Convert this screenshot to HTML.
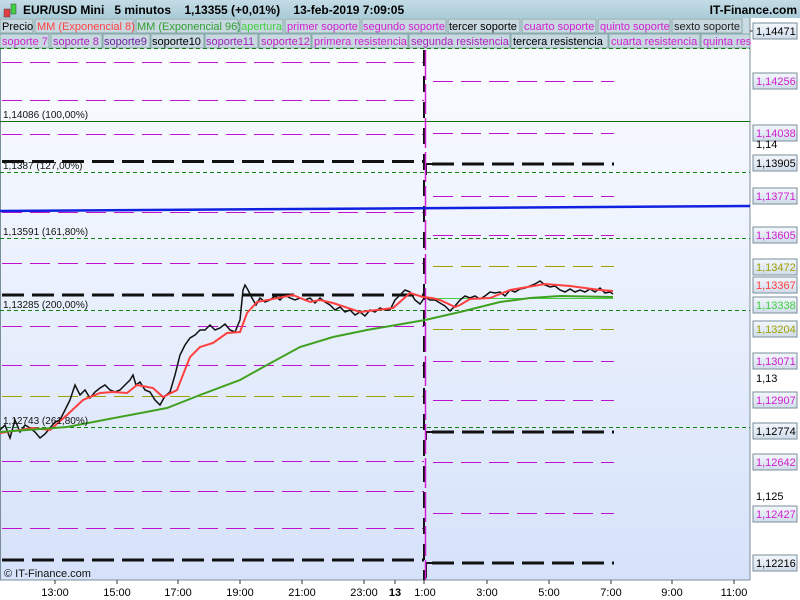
<!DOCTYPE html><html><head><meta charset="utf-8"><style>
body{margin:0;width:800px;height:600px;overflow:hidden;font-family:"Liberation Sans",sans-serif;background:#fff}
svg{display:block}
</style></head><body>
<svg width="800" height="600" xmlns="http://www.w3.org/2000/svg" font-family="Liberation Sans, sans-serif">
<defs>
<linearGradient id="bg" x1="0" y1="0" x2="0" y2="1"><stop offset="0" stop-color="#fafcff"/><stop offset="1" stop-color="#d6e2fa"/></linearGradient>
<linearGradient id="hd" x1="0" y1="0" x2="0" y2="1"><stop offset="0" stop-color="#c4dce6"/><stop offset="1" stop-color="#a9cbd8"/></linearGradient>
<linearGradient id="bx" x1="0" y1="0" x2="0" y2="1"><stop offset="0" stop-color="#f4f8fc"/><stop offset="1" stop-color="#d0dcea"/></linearGradient>
</defs>
<rect width="800" height="600" fill="#fff"/>
<rect x="0" y="0" width="800" height="18" fill="url(#hd)"/>
<rect x="0" y="18" width="750" height="30" fill="#c9dbe3"/>
<rect x="0" y="48" width="750" height="532" fill="url(#bg)"/>
<line x1="750" y1="18" x2="750" y2="580" stroke="#7a8e9a"/>
<line x1="0" y1="580" x2="750" y2="580" stroke="#7a8e9a"/>
<line x1="0.5" y1="48" x2="0.5" y2="580" stroke="#7a8e9a"/>
<rect x="4" y="9" width="6" height="8" fill="#e04040" stroke="#444" stroke-width=".5"/>
<rect x="11" y="4" width="5" height="10" fill="#40d040" stroke="#444" stroke-width=".5"/>
<text x="23" y="14" font-size="12" font-weight="bold">EUR/USD Mini&#160;&#160;&#160;5 minutos&#160;&#160;&#160;&#160;1,13355 (+0,01%)&#160;&#160;&#160;&#160;13-feb-2019 7:09:05</text>
<text x="797" y="14" font-size="12" font-weight="bold" text-anchor="end">IT-Finance.com</text>
<g font-size="11">
<rect x="0" y="19" width="33" height="14" fill="#c8d8e0" stroke="#8aa"/><text x="2" y="30">Precio</text>
<rect x="35" y="19" width="99" height="14" fill="#c8d8e0" stroke="#8aa"/><text x="37" y="30" fill="#ff4040">MM (Exponencial 8)</text>
<rect x="136" y="19" width="102" height="14" fill="#c8d8e0" stroke="#8aa"/><text x="137" y="30" fill="#30a030">MM (Exponencial 96)</text>
<rect x="240" y="19" width="43" height="14" fill="#c8d8e0" stroke="#8aa"/><text x="241" y="30" fill="#40d040">apertura</text>
<rect x="285" y="19" width="75" height="14" fill="#c8d8e0" stroke="#8aa"/><text x="287" y="30" fill="#d020d0">primer soporte</text>
<rect x="362" y="19" width="84" height="14" fill="#c8d8e0" stroke="#8aa"/><text x="363" y="30" fill="#d020d0">segundo soporte</text>
<rect x="448" y="19" width="72" height="14" fill="#c8d8e0" stroke="#8aa"/><text x="449" y="30">tercer soporte</text>
<rect x="522" y="19" width="74" height="14" fill="#c8d8e0" stroke="#8aa"/><text x="524" y="30" fill="#d020d0">cuarto soporte</text>
<rect x="598" y="19" width="72" height="14" fill="#c8d8e0" stroke="#8aa"/><text x="600" y="30" fill="#d020d0">quinto soporte</text>
<rect x="672" y="19" width="70" height="14" fill="#c8d8e0" stroke="#8aa"/><text x="674" y="30" fill="#202020">sexto soporte</text>
<rect x="0" y="34" width="49" height="14" fill="#c8d8e0" stroke="#8aa"/><text x="2" y="45" fill="#d020d0">soporte 7</text>
<rect x="51" y="34" width="51" height="14" fill="#c8d8e0" stroke="#8aa"/><text x="53" y="45" fill="#b020c0">soporte 8</text>
<rect x="103" y="34" width="47" height="14" fill="#c8d8e0" stroke="#8aa"/><text x="104" y="45" fill="#7020a0">soporte9</text>
<rect x="151" y="34" width="53" height="14" fill="#c8d8e0" stroke="#8aa"/><text x="152" y="45">soporte10</text>
<rect x="205" y="34" width="53" height="14" fill="#c8d8e0" stroke="#8aa"/><text x="206" y="45" fill="#a020c0">soporte11</text>
<rect x="259" y="34" width="52" height="14" fill="#c8d8e0" stroke="#8aa"/><text x="261" y="45" fill="#c020c0">soporte12</text>
<rect x="312" y="34" width="96" height="14" fill="#c8d8e0" stroke="#8aa"/><text x="314" y="45" fill="#d020d0">primera resistencia</text>
<rect x="409" y="34" width="101" height="14" fill="#c8d8e0" stroke="#8aa"/><text x="411" y="45" fill="#b020c0">segunda resistencia</text>
<rect x="511" y="34" width="97" height="14" fill="#c8d8e0" stroke="#8aa"/><text x="513" y="45">tercera resistencia</text>
<rect x="609" y="34" width="91" height="14" fill="#c8d8e0" stroke="#8aa"/><text x="611" y="45" fill="#d020d0">cuarta resistencia</text>
<rect x="701" y="34" width="49" height="14" fill="#c8d8e0" stroke="#8aa"/><text x="703" y="45" fill="#d020d0">quinta res</text>
</g>
<g stroke="#108010" stroke-dasharray="4,3" stroke-width="1">
<line x1="0" y1="48.5" x2="750" y2="48.5"/><line x1="0" y1="172.5" x2="750" y2="172.5"/><line x1="0" y1="238.5" x2="750" y2="238.5"/><line x1="0" y1="310.5" x2="750" y2="310.5"/><line x1="0" y1="427.5" x2="750" y2="427.5"/>
</g>
<line x1="0" y1="121.5" x2="750" y2="121.5" stroke="#107010"/>
<g stroke="#c010d0" stroke-dasharray="20,8">
<line x1="2" y1="62.5" x2="424" y2="62.5"/><line x1="2" y1="100.5" x2="424" y2="100.5"/><line x1="2" y1="134.5" x2="424" y2="134.5"/><line x1="2" y1="212.5" x2="424" y2="212.5"/><line x1="2" y1="263.5" x2="424" y2="263.5"/><line x1="2" y1="326.5" x2="424" y2="326.5"/><line x1="2" y1="365.5" x2="424" y2="365.5"/><line x1="2" y1="461.5" x2="424" y2="461.5"/><line x1="2" y1="491.5" x2="424" y2="491.5"/><line x1="2" y1="528.5" x2="424" y2="528.5"/>
</g>
<line x1="2" y1="396.5" x2="424" y2="396.5" stroke="#a0a000" stroke-dasharray="20,8"/>
<g stroke="#111" stroke-width="3" stroke-dasharray="22,8">
<line x1="2" y1="161.5" x2="424" y2="161.5"/><line x1="2" y1="295" x2="424" y2="295"/><line x1="2" y1="560" x2="424" y2="560"/>
</g>
<g stroke="#c010d0" stroke-dasharray="20,8">
<line x1="433" y1="81.5" x2="614" y2="81.5"/><line x1="433" y1="133.5" x2="614" y2="133.5"/><line x1="433" y1="196.5" x2="614" y2="196.5"/><line x1="433" y1="235.5" x2="614" y2="235.5"/><line x1="433" y1="361.5" x2="614" y2="361.5"/><line x1="433" y1="400.5" x2="614" y2="400.5"/><line x1="433" y1="462.5" x2="614" y2="462.5"/><line x1="433" y1="513.5" x2="614" y2="513.5"/>
</g>
<g stroke="#a0a000" stroke-dasharray="20,8"><line x1="433" y1="266.5" x2="614" y2="266.5"/><line x1="433" y1="329.5" x2="614" y2="329.5"/></g>
<g stroke="#111" stroke-width="3" stroke-dasharray="22,8">
<line x1="432" y1="164" x2="614" y2="164"/><line x1="432" y1="432" x2="614" y2="432"/><line x1="432" y1="563" x2="614" y2="563"/>
</g>
<polyline points="426,175 426,164 432,164" fill="none" stroke="#111" stroke-width="2"/>
<polyline points="426,440 426,432 432,432" fill="none" stroke="#111" stroke-width="2"/>
<polyline points="426,578 426,563 432,563" fill="none" stroke="#111" stroke-width="2"/>
<line x1="432" y1="298.5" x2="613" y2="298.5" stroke="#40d040"/>
<line x1="424" y1="50" x2="424" y2="580" stroke="#111" stroke-width="2" stroke-dasharray="16,10"/>
<line x1="425.5" y1="50" x2="425.5" y2="580" stroke="#d020d0" stroke-width="1.5" stroke-dasharray="30,4"/>
<line x1="0" y1="211" x2="750" y2="206" stroke="#1020e0" stroke-width="2.5"/>
<polyline fill="none" stroke="#111" stroke-width="1.5" points="0,430 5,425 10,438 15,420 20,432 25,425 30,428 35,432 40,438 45,434 50,428 55,422 60,420 65,410 70,400 75,385 80,395 85,390 90,398 95,392 100,388 105,385 110,390 115,392 120,390 125,385 130,380 133,375 136,385 140,382 145,390 150,392 155,400 160,405 165,396 170,392 175,375 180,355 185,345 190,338 195,335 200,330 205,330 210,325 215,330 220,328 225,324 230,330 235,332 240,320 243,290 245,285 248,290 252,298 256,305 260,298 265,302 270,300 275,296 280,300 285,295 290,298 295,300 300,298 305,300 310,298 315,303 320,298 325,302 330,305 335,310 340,307 345,312 350,310 355,315 360,312 365,316 370,310 375,312 380,308 385,310 390,310 395,300 400,295 405,290 410,292 415,300 420,304 425,297 430,300 435,300 440,303 445,306 450,311 455,306 460,300 465,296 470,298 475,296 480,299 485,296 490,292 495,293 500,292 505,296 510,290 515,292 520,289 525,288 530,286 535,284 540,281 545,285 550,287 555,286 560,290 565,292 570,289 575,292 580,290 585,292 590,289 595,292 600,288 605,293 610,292 613,294"/>
<polyline fill="none" stroke="#ff4040" stroke-width="2" points="0,433 33,428 50,430 67,415 83,400 100,393 113,392 127,393 137,385 153,388 163,397 177,390 190,357 200,347 213,343 227,333 240,332 247,313 257,302 293,295 310,302 320,300 333,303 360,312 393,308 410,293 423,297 432,298 440,300 455,307 460,305 470,299 490,298 510,290 545,284 570,286 600,290 613,291"/>
<polyline fill="none" stroke="#40a020" stroke-width="2" points="0,432 67,427 167,408 200,395 240,380 267,365 300,347 333,337 367,330 425,320 460,312 500,302 530,298 560,296 613,297"/>
<g font-size="10" fill="#111">
<text x="3" y="118">1,14086 (100,00%)</text>
<text x="3" y="169">1,1387 (127,00%)</text>
<text x="3" y="235">1,13591 (161,80%)</text>
<text x="3" y="308">1,13285 (200,00%)</text>
<text x="3" y="424">1,12743 (261,80%)</text>
<text x="4" y="577" font-size="11">© IT-Finance.com</text>
</g>
<g font-size="11">
<line x1="750" y1="31" x2="753" y2="31" stroke="#333"/>
<g fill="url(#bx)" stroke="#7a8e9a">
<rect x="753" y="23" width="44" height="16"/><rect x="753" y="73" width="44" height="16"/><rect x="753" y="125" width="44" height="16"/><rect x="753" y="155" width="44" height="16"/><rect x="753" y="188" width="44" height="16"/><rect x="753" y="227" width="44" height="16"/><rect x="753" y="259" width="44" height="16"/><rect x="753" y="277" width="44" height="16"/><rect x="753" y="297" width="44" height="16"/><rect x="753" y="321" width="44" height="16"/><rect x="753" y="353" width="44" height="16"/><rect x="753" y="392" width="44" height="16"/><rect x="753" y="423" width="44" height="16"/><rect x="753" y="454" width="44" height="16"/><rect x="753" y="506" width="44" height="16"/><rect x="753" y="555" width="44" height="16"/>
</g>
<text x="756" y="35">1,14471</text>
<text x="756" y="85" fill="#d020d0">1,14256</text>
<text x="756" y="137" fill="#d020d0">1,14038</text>
<text x="756" y="148">1,14</text>
<text x="756" y="167">1,13905</text>
<text x="756" y="200" fill="#d020d0">1,13771</text>
<text x="756" y="239" fill="#d020d0">1,13605</text>
<text x="756" y="271" fill="#a0a000">1,13472</text>
<text x="756" y="289" fill="#ff4040">1,13367</text>
<text x="756" y="309" fill="#40d040">1,13338</text>
<text x="756" y="333" fill="#a0a000">1,13204</text>
<text x="756" y="365" fill="#d020d0">1,13071</text>
<text x="756" y="382">1,13</text>
<text x="756" y="404" fill="#d020d0">1,12907</text>
<text x="756" y="435">1,12774</text>
<text x="756" y="466" fill="#d020d0">1,12642</text>
<text x="756" y="500">1,125</text>
<text x="756" y="518" fill="#d020d0">1,12427</text>
<text x="756" y="567">1,12216</text>
</g>
<g stroke="#333"><line x1="55" y1="580" x2="55" y2="584"/><line x1="117" y1="580" x2="117" y2="584"/><line x1="178" y1="580" x2="178" y2="584"/><line x1="240" y1="580" x2="240" y2="584"/><line x1="302" y1="580" x2="302" y2="584"/><line x1="364" y1="580" x2="364" y2="584"/><line x1="395" y1="580" x2="395" y2="584"/><line x1="424" y1="580" x2="424" y2="584"/><line x1="487" y1="580" x2="487" y2="584"/><line x1="549" y1="580" x2="549" y2="584"/><line x1="611" y1="580" x2="611" y2="584"/><line x1="672" y1="580" x2="672" y2="584"/><line x1="734" y1="580" x2="734" y2="584"/></g>
<g font-size="11" text-anchor="middle">
<text x="55" y="596">13:00</text><text x="117" y="596">15:00</text><text x="178" y="596">17:00</text><text x="240" y="596">19:00</text><text x="302" y="596">21:00</text><text x="364" y="596">23:00</text><text x="395" y="596" font-weight="bold">13</text><text x="425" y="596">1:00</text><text x="487" y="596">3:00</text><text x="549" y="596">5:00</text><text x="611" y="596">7:00</text><text x="672" y="596">9:00</text><text x="734" y="596">11:00</text>
</g>
</svg>
</body></html>
